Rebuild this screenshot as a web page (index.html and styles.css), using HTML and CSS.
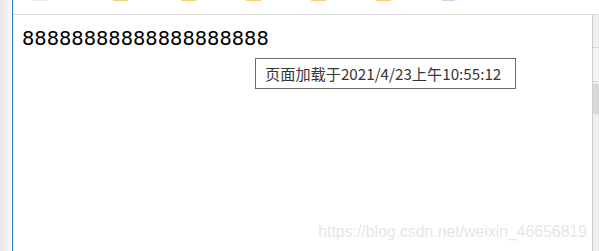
FILE: index.html
```html
<!DOCTYPE html>
<html lang="zh-CN">
<head>
<meta charset="utf-8">
<title>页面加载时间</title>
<link rel="stylesheet" href="styles.css">
</head>
<body>
<div class="frame">
  <div class="shade"></div>
  <div class="pane">
    <div class="toolbar">
      <span class="tb-icon tb-faint first"></span>
      <span class="tb-icon tb-yellow i2"></span>
      <span class="tb-icon tb-yellow i3"></span>
      <span class="tb-icon tb-yellow i4"></span>
      <span class="tb-icon tb-yellow i5"></span>
      <span class="tb-icon tb-yellow i6"></span>
      <span class="tb-icon tb-purple i7"></span>
    </div>
    <div class="content">
      <div class="page">
        <div class="digits">88888888888888888888</div>
        <div class="tooltip">页面加载于2021/4/23上午10:55:12</div>
        <div class="watermark">https://blog.csdn.net/weixin_46656819</div>
      </div>
      <div class="scrollbar">
        <div class="sb-btn sb-up"></div>
        <div class="sb-btn sb-second"></div>
        <div class="sb-gap"></div>
        <div class="sb-thumb"></div>
        <div class="sb-track"></div>
      </div>
    </div>
  </div>
</div>
</body>
</html>
```

FILE: styles.css
```css
html, body {
  margin: 0;
  padding: 0;
  background: #ffffff;
  overflow: hidden;
}

.frame {
  display: flex;
  width: 599px;
  height: 251px;
}

.shade {
  width: 12px;
  flex: none;
  background: linear-gradient(to right, #e6e6e6, #fbfbfb);
}

.pane {
  flex: 1;
  display: flex;
  flex-direction: column;
  border-left: 1px solid #2f7ccc;
  min-width: 0;
}

.toolbar {
  height: 14px;
  flex: none;
  border-bottom: 1px solid #dadada;
  display: flex;
  align-items: flex-start;
}

.tb-icon {
  display: block;
  width: 15px;
  height: 1px;
}

.tb-faint { background: #eee8f5; width: 16px; }
.tb-yellow { background: #f4d36c; }
.tb-purple { background: #cfcdf2; width: 13px; }

.first { margin-left: 19px; }
.i2 { margin-left: 65px; }
.i3 { margin-left: 53px; }
.i4 { margin-left: 50px; }
.i5 { margin-left: 50px; }
.i6 { margin-left: 50px; }
.i7 { margin-left: 51px; }

.content {
  flex: 1;
  display: flex;
  min-height: 0;
}

.page {
  flex: 1;
  position: relative;
  background: #ffffff;
}

.digits {
  font-family: "DejaVu Sans", sans-serif;
  font-size: 19.4px;
  color: #000000;
  padding: 12px 0 0 9px;
  white-space: nowrap;
}

.tooltip {
  position: absolute;
  left: 242px;
  top: 43px;
  width: 261px;
  height: 31px;
  box-sizing: border-box;
  border: 1px solid #6a6a6a;
  background: #ffffff;
  color: #363636;
  font-family: "Noto Sans CJK SC", "Noto Sans", sans-serif;
  font-size: 15.2px;
  line-height: 29px;
  padding-left: 9px;
  white-space: nowrap;
}

.watermark {
  position: absolute;
  right: 5px;
  bottom: 10.5px;
  font-family: "Liberation Sans", Arial, sans-serif;
  font-size: 15.8px;
  line-height: 18px;
  color: #e6e6e6;
  white-space: nowrap;
}

.scrollbar {
  width: 6px;
  flex: none;
  border-left: 1px solid #cccccc;
  background: #f0f0f0;
  display: flex;
  flex-direction: column;
}

.sb-btn {
  flex: none;
  border-bottom: 1px solid #d6d6d6;
}

.sb-up { height: 32px; background: #f0f0f0; }
.sb-second { height: 33px; background: #f4f4f4; }
.sb-gap { height: 2px; flex: none; background: #f0f0f0; }
.sb-thumb { height: 30px; flex: none; background: #d9d9d9; }
.sb-track { flex: 1; background: #f0f0f0; }
```
